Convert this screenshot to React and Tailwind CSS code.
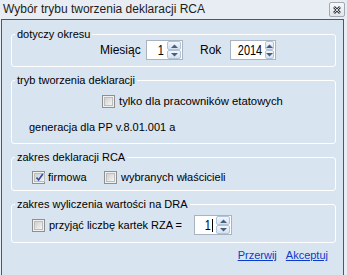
import React from 'react';

function Arrow({ up }) {
  return (
    <svg width="7" height="4" viewBox="0 0 7 4">
      <path d={up ? 'M0 4 L3.5 0.5 L7 4Z' : 'M0 0 L3.5 3.5 L7 0Z'} fill="#4a5d7c" />
    </svg>
  );
}

function Spin({ value, width, caret }) {
  return (
    <div className={`${width} h-[20px] bg-white border border-[#a9b3c0] flex items-center shrink-0`}>
      <span className="flex-1 flex justify-end items-center pr-[3px]">
        <span className="inline-block origin-right scale-x-[0.78] text-[14px] leading-[16px]">{value}</span>
        {caret && <span className="w-px h-[13px] bg-black ml-px" />}
      </span>
      <div className="w-[14px] h-[18px] mr-px flex flex-col">
        <div className="h-[9px] flex items-center justify-center border border-[#b3c3d6] rounded-[2px] bg-gradient-to-b from-[#f1f6fc] to-[#d3e2f2]">
          <Arrow up />
        </div>
        <div className="h-[9px] flex items-center justify-center border border-[#b3c3d6] rounded-[2px] bg-gradient-to-b from-[#f1f6fc] to-[#d3e2f2]">
          <Arrow />
        </div>
      </div>
    </div>
  );
}

function Check({ checked }) {
  return (
    <span className="w-[13px] h-[13px] border border-[#8e8f8f] bg-[#f0f0f0] p-px flex shrink-0">
      <span className="flex-1 flex items-center justify-center border border-[#bdbdbd] bg-gradient-to-br from-[#cfcfcf] to-[#f6f6f6]">
        {checked && (
          <svg width="9" height="9" viewBox="0 0 9 9">
            <path d="M1.5 4.5 L3.6 7 L7.8 1" fill="none" stroke="#2f4aa0" strokeWidth="1.6" />
          </svg>
        )}
      </span>
    </span>
  );
}

export default function App() {
  return (
    <div className="w-[347px] h-[275px] bg-[#e8edf3] font-['Liberation_Sans',Arial,sans-serif] text-[11px] text-black overflow-hidden">
      {/* title bar */}
      <div className="h-[19px] flex items-center pl-[3px] pr-[2px]">
        <span className="flex-1 text-[12px] leading-[19px] text-[#1c1c1c]">Wybór trybu tworzenia deklaracji RCA</span>
        <div className="w-[16px] h-[15px] border border-[#a2a9b2] rounded-[2px] bg-gradient-to-b from-[#f6f8fa] to-[#e0e5eb] flex items-center justify-center">
          <svg width="8" height="8" viewBox="0 0 8 8">
            <path d="M1 1 L7 7 M7 1 L1 7" stroke="#3a3f46" strokeWidth="2.6" />
            <path d="M1.3 1.3 L6.7 6.7 M6.7 1.3 L1.3 6.7" stroke="#ffffff" strokeWidth="0.8" />
          </svg>
        </div>
      </div>

      {/* client area */}
      <div className="ml-[1px] w-[343px] h-[256px] border-l border-t border-r border-[#4e5763] bg-[#d9e4f1] pl-[9px] pr-[7px]">
        <fieldset className="mt-[8px] border border-white rounded-[3px] pb-[6px]">
          <legend className="ml-[3px] px-[2px] leading-[13px]">dotyczy okresu</legend>
          <div className="-mt-px h-[20px] flex items-center pl-[88px]">
            <span className="w-[46px] text-[12px]">Miesiąc</span>
            <Spin value="1" width="w-[37px]" />
            <span className="ml-[17px] w-[30px] text-[12px]">Rok</span>
            <Spin value="2014" width="w-[46px]" />
          </div>
        </fieldset>

        <fieldset className="mt-[7px] border border-white rounded-[3px] pb-[9px]">
          <legend className="ml-[3px] px-[2px] leading-[13px]">tryb tworzenia deklaracji</legend>
          <div className="mt-[8px] h-[13px] flex items-center gap-[4px] pl-[90px]">
            <Check />
            <span className="leading-[13px] text-[11.3px]">tylko dla pracowników etatowych</span>
          </div>
          <div className="mt-[13px] pl-[17px] leading-[13px]">generacja dla PP v.8.01.001 a</div>
        </fieldset>

        <fieldset className="mt-[7px] border border-white rounded-[3px] pb-[6px]">
          <legend className="ml-[3px] px-[2px] leading-[13px]">zakres deklaracji RCA</legend>
          <div className="mt-[7px] h-[13px] flex items-center pl-[20px]">
            <div className="w-[72px] flex items-center gap-[3px]">
              <Check checked />
              <span className="leading-[13px]">firmowa</span>
            </div>
            <div className="flex items-center gap-[4px]">
              <Check />
              <span className="leading-[13px]">wybranych właścicieli</span>
            </div>
          </div>
        </fieldset>

        <fieldset className="mt-[7px] border border-white rounded-[3px] pb-[7px]">
          <legend className="ml-[3px] px-[2px] leading-[13px]">zakres wyliczenia wartości na DRA</legend>
          <div className="mt-[4px] h-[20px] flex items-center pl-[20px]">
            <Check />
            <span className="ml-[4px] w-[145px] leading-[13px]">przyjąć liczbę kartek RZA =</span>
            <Spin value="1" width="w-[38px]" caret />
          </div>
        </fieldset>

        <div className="mt-[6px] flex justify-end gap-[9px] pr-[8px] leading-[13px] text-[#0b3bc9]">
          <a href="#" className="underline">Przerwij</a>
          <a href="#" className="underline">Akceptuj</a>
        </div>
      </div>
    </div>
  );
}
